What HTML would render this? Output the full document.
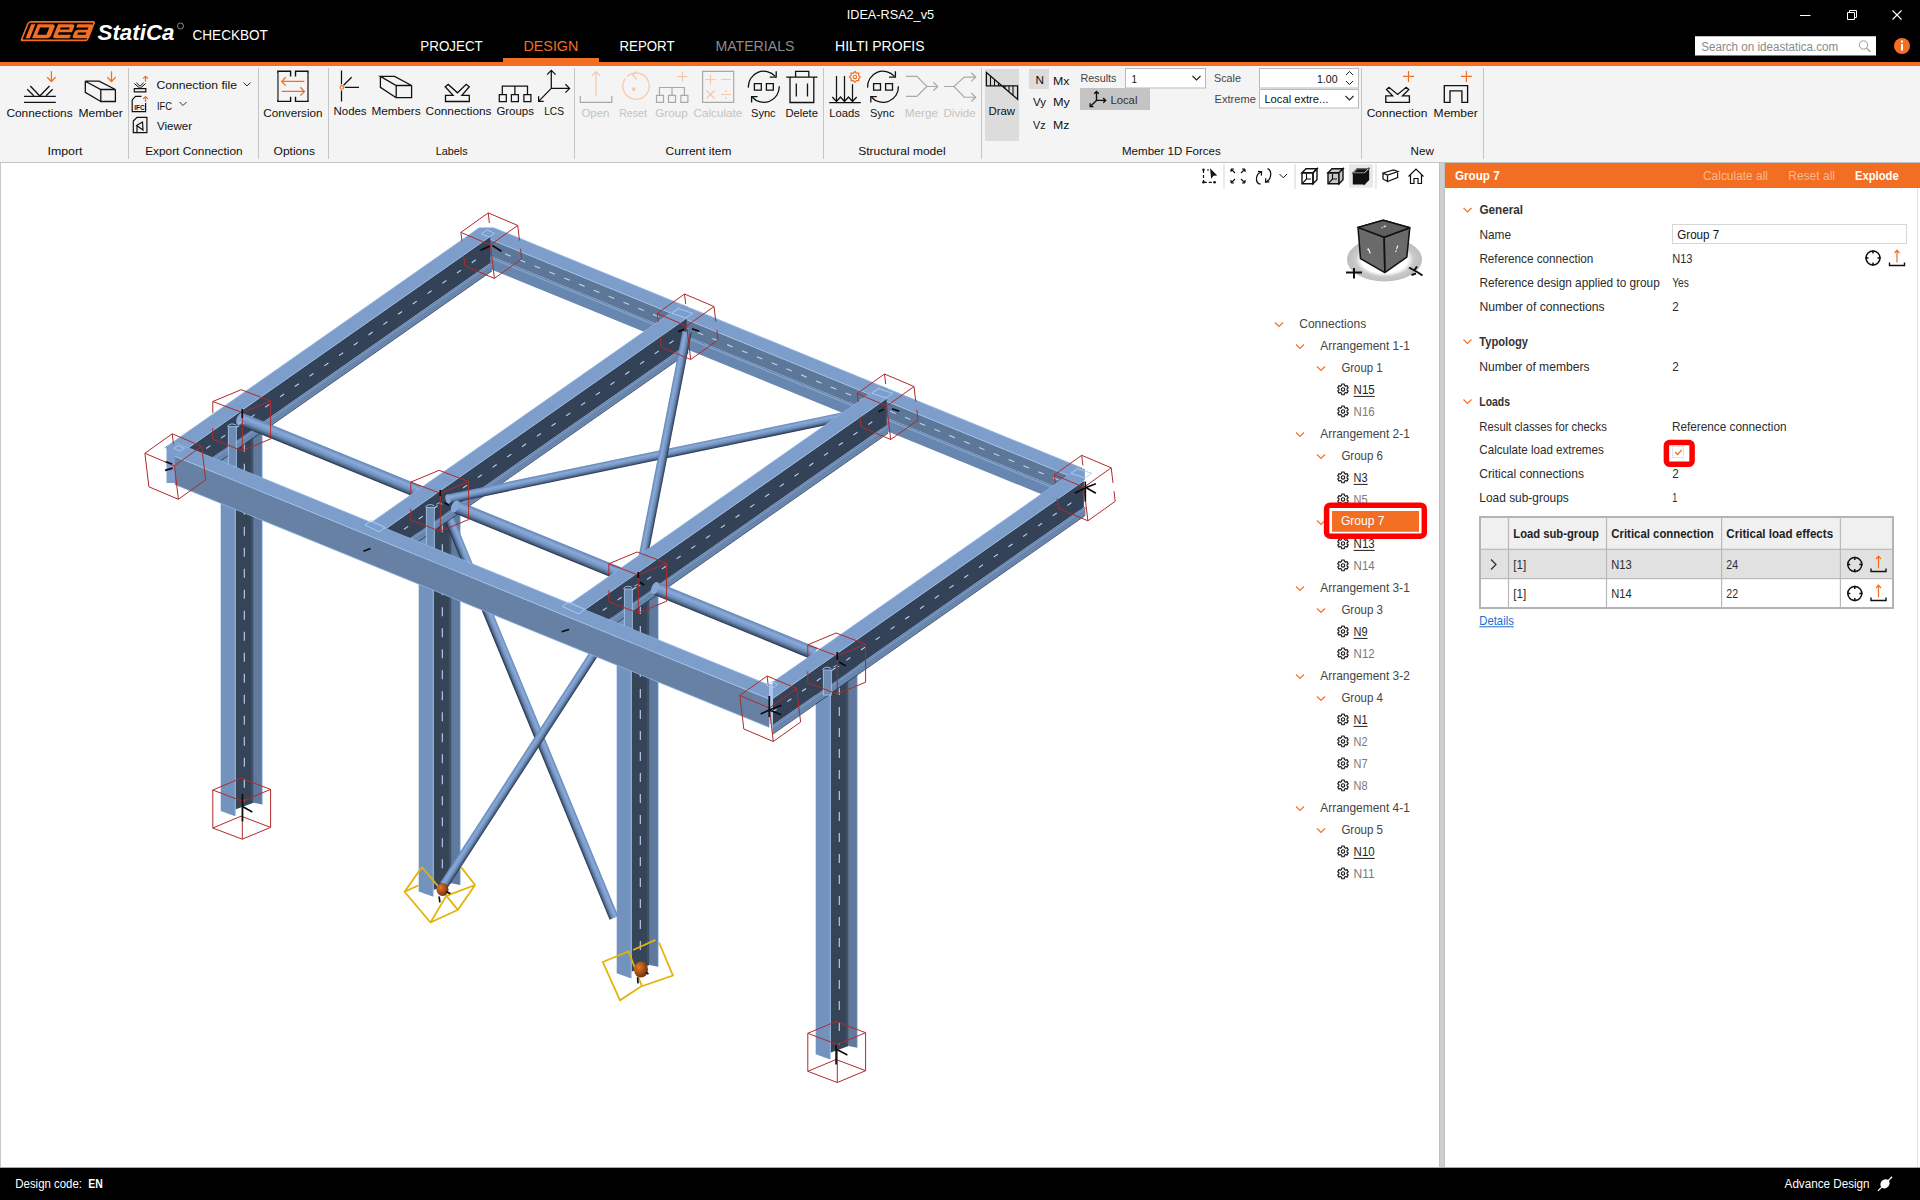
<!DOCTYPE html>
<html><head><meta charset="utf-8"><title>IDEA StatiCa Checkbot</title>
<style>*{margin:0;padding:0}html,body{width:1920px;height:1200px;overflow:hidden;background:#fff;font-family:"Liberation Sans",sans-serif}</style>
</head><body>
<svg width="1920" height="1200" viewBox="0 0 1920 1200" style="position:absolute;left:0;top:0;font-family:'Liberation Sans',sans-serif"><rect x="0" y="0" width="1920" height="62" fill="#000" />
<rect x="0" y="62" width="1920" height="4" fill="#f26e22" />
<rect x="503" y="58" width="96" height="4" fill="#f26e22" />
<rect x="0" y="66" width="1920" height="96" fill="#f4f4f4" />
<rect x="0" y="162" width="1920" height="1" fill="#c4c4c4" />
<g transform="translate(20.5,21) skewX(-22)"><rect x="8.5" y="0.8" width="66" height="18.6" rx="2" fill="none" stroke="#f26e22" stroke-width="1.7"/><rect x="12" y="3.2" width="4.2" height="14" fill="#f26e22"/><path d="M18.5 3.2 H33 Q36.5 3.2 36.5 6.5 V14 Q36.5 17.2 33 17.2 H18.5 Z M22.3 6.6 V13.8 H31.5 V6.6 Z" fill="#f26e22" fill-rule="evenodd"/><path d="M38.8 3.2 H53 Q56 3.2 56 6 V11.2 H42.8 V13.8 H56 V17.2 H41.5 Q38.8 17.2 38.8 14.5 Z M42.8 6.6 V8.6 H52 V6.6 Z" fill="#f26e22" fill-rule="evenodd"/><path d="M58.3 3.2 H72 Q74.6 3.2 74.6 6 V17.2 H61 Q58.3 17.2 58.3 14.5 V11.5 Q58.3 8.8 61 8.8 H70.6 V6.6 H58.3 Z M62.3 11.6 V13.8 H70.6 V11.6 Z" fill="#f26e22" fill-rule="evenodd"/></g>
<text x="97.5" y="39.6" font-size="22" fill="#fff" font-weight="700" textLength="77" lengthAdjust="spacingAndGlyphs" style="font-style:italic" >StatiCa</text>
<circle cx="180.5" cy="26" r="3" fill="none" stroke="#aaa" stroke-width="0.8"/>
<text x="192.5" y="40" font-size="15" fill="#fff" textLength="75.4" lengthAdjust="spacingAndGlyphs" >CHECKBOT</text>
<text x="846.75" y="18.8" font-size="13.5" fill="#fff" textLength="87.3" lengthAdjust="spacingAndGlyphs" >IDEA-RSA2_v5</text>
<text x="420.3" y="51" font-size="15" fill="#fff" textLength="62.5" lengthAdjust="spacingAndGlyphs" >PROJECT</text>
<text x="523.4" y="51" font-size="15" fill="#f26e22" textLength="55" lengthAdjust="spacingAndGlyphs" >DESIGN</text>
<text x="619.5" y="51" font-size="15" fill="#fff" textLength="55" lengthAdjust="spacingAndGlyphs" >REPORT</text>
<text x="715.4" y="51" font-size="15" fill="#8c8c8c" textLength="79.1" lengthAdjust="spacingAndGlyphs" >MATERIALS</text>
<text x="835.1" y="51" font-size="15" fill="#fff" textLength="89.4" lengthAdjust="spacingAndGlyphs" >HILTI PROFIS</text>
<line x1="1800" y1="15.5" x2="1810.5" y2="15.5" stroke="#fff" stroke-width="1" />
<path d="M1847.5 12.5 h7 v7 h-7 z M1849.5 12.5 v-2 h7 v7 h-2" fill="none" stroke="#fff" stroke-width="1"/>
<path d="M1892.5 10.5 L1901.5 19.5 M1901.5 10.5 L1892.5 19.5" stroke="#fff" stroke-width="1.1"/>
<rect x="1695" y="36.25" width="181" height="19.25" fill="#fff" />
<text x="1701.25" y="51" font-size="12.5" fill="#8a8a8a" textLength="137" lengthAdjust="spacingAndGlyphs" >Search on ideastatica.com</text>
<circle cx="1863.5" cy="45" r="4.2" fill="none" stroke="#999" stroke-width="1"/><line x1="1866.5" y1="48" x2="1870.5" y2="52" stroke="#999" stroke-width="1.1"/>
<circle cx="1902" cy="46" r="8" fill="#f26e22"/>
<rect x="1901" y="44" width="2" height="6.5" fill="#fff" />
<rect x="1901" y="40.5" width="2" height="2" fill="#fff" />
<rect x="128.0" y="68" width="1" height="91" fill="#c6c6c6" />
<rect x="258.0" y="68" width="1" height="91" fill="#c6c6c6" />
<rect x="328.0" y="68" width="1" height="91" fill="#c6c6c6" />
<rect x="574.0" y="68" width="1" height="91" fill="#c6c6c6" />
<rect x="823.0" y="68" width="1" height="91" fill="#c6c6c6" />
<rect x="981.0" y="68" width="1" height="91" fill="#c6c6c6" />
<rect x="1361.0" y="68" width="1" height="91" fill="#c6c6c6" />
<rect x="1483.0" y="68" width="1" height="91" fill="#c6c6c6" />
<text x="6.4" y="116.8" font-size="11.6" fill="#111" textLength="66.2" lengthAdjust="spacingAndGlyphs" >Connections</text>
<text x="78.4" y="116.8" font-size="11.6" fill="#111" textLength="44.3" lengthAdjust="spacingAndGlyphs" >Member</text>
<text x="263.3" y="116.8" font-size="11.6" fill="#111" textLength="59.3" lengthAdjust="spacingAndGlyphs" >Conversion</text>
<text x="581.4" y="116.8" font-size="11.6" fill="#c3c3c3" textLength="28" lengthAdjust="spacingAndGlyphs" >Open</text>
<text x="619.2" y="116.8" font-size="11.6" fill="#c3c3c3" textLength="27.8" lengthAdjust="spacingAndGlyphs" >Reset</text>
<text x="655.3" y="116.8" font-size="11.6" fill="#c3c3c3" textLength="32.4" lengthAdjust="spacingAndGlyphs" >Group</text>
<text x="693.6" y="116.8" font-size="11.6" fill="#c3c3c3" textLength="48.6" lengthAdjust="spacingAndGlyphs" >Calculate</text>
<text x="751" y="116.8" font-size="11.6" fill="#111" textLength="24.6" lengthAdjust="spacingAndGlyphs" >Sync</text>
<text x="785.5" y="116.8" font-size="11.6" fill="#111" textLength="32.4" lengthAdjust="spacingAndGlyphs" >Delete</text>
<text x="829.2" y="116.8" font-size="11.6" fill="#111" textLength="30.7" lengthAdjust="spacingAndGlyphs" >Loads</text>
<text x="870" y="116.8" font-size="11.6" fill="#111" textLength="24.4" lengthAdjust="spacingAndGlyphs" >Sync</text>
<text x="904.7" y="116.8" font-size="11.6" fill="#c3c3c3" textLength="33.3" lengthAdjust="spacingAndGlyphs" >Merge</text>
<text x="943.4" y="116.8" font-size="11.6" fill="#c3c3c3" textLength="32.4" lengthAdjust="spacingAndGlyphs" >Divide</text>
<text x="1366.7" y="116.8" font-size="11.6" fill="#111" textLength="60.7" lengthAdjust="spacingAndGlyphs" >Connection</text>
<text x="1433.6" y="116.8" font-size="11.6" fill="#111" textLength="44.2" lengthAdjust="spacingAndGlyphs" >Member</text>
<text x="333.5" y="114.8" font-size="11.6" fill="#111" textLength="33.1" lengthAdjust="spacingAndGlyphs" >Nodes</text>
<text x="371.4" y="114.8" font-size="11.6" fill="#111" textLength="49.2" lengthAdjust="spacingAndGlyphs" >Members</text>
<text x="425.6" y="114.8" font-size="11.6" fill="#111" textLength="65.9" lengthAdjust="spacingAndGlyphs" >Connections</text>
<text x="496.4" y="114.8" font-size="11.6" fill="#111" textLength="37.6" lengthAdjust="spacingAndGlyphs" >Groups</text>
<text x="544.2" y="114.8" font-size="11.6" fill="#111" textLength="19.8" lengthAdjust="spacingAndGlyphs" >LCS</text>
<text x="47.5" y="154.8" font-size="11.6" fill="#111" textLength="35" lengthAdjust="spacingAndGlyphs" >Import</text>
<text x="145.2" y="154.8" font-size="11.6" fill="#111" textLength="97.4" lengthAdjust="spacingAndGlyphs" >Export Connection</text>
<text x="273.6" y="154.8" font-size="11.6" fill="#111" textLength="41.3" lengthAdjust="spacingAndGlyphs" >Options</text>
<text x="435.7" y="154.8" font-size="11.6" fill="#111" textLength="31.9" lengthAdjust="spacingAndGlyphs" >Labels</text>
<text x="665.6" y="154.8" font-size="11.6" fill="#111" textLength="65.9" lengthAdjust="spacingAndGlyphs" >Current item</text>
<text x="858.3" y="154.8" font-size="11.6" fill="#111" textLength="87.3" lengthAdjust="spacingAndGlyphs" >Structural model</text>
<text x="1122" y="154.8" font-size="11.6" fill="#111" textLength="98.7" lengthAdjust="spacingAndGlyphs" >Member 1D Forces</text>
<text x="1410.6" y="154.8" font-size="11.6" fill="#111" textLength="23.2" lengthAdjust="spacingAndGlyphs" >New</text>
<text x="156.4" y="89.3" font-size="11.6" fill="#111" textLength="80.6" lengthAdjust="spacingAndGlyphs" >Connection file</text>
<text x="157" y="109.5" font-size="11.6" fill="#111" textLength="15" lengthAdjust="spacingAndGlyphs" >IFC</text>
<text x="157" y="130" font-size="11.6" fill="#111" textLength="35" lengthAdjust="spacingAndGlyphs" >Viewer</text>
<path d="M243.5 82.5 l3.5 3.5 l3.5 -3.5" fill="none" stroke="#333" stroke-width="1"/>
<path d="M179.5 102 l3.5 3.5 l3.5 -3.5" fill="none" stroke="#333" stroke-width="1"/>
<rect x="985" y="69" width="34" height="72" fill="#dcdcdc" />
<rect x="1029" y="69" width="20" height="20" fill="#dcdcdc" />
<text x="988.5" y="115" font-size="11.6" fill="#111" textLength="26.5" lengthAdjust="spacingAndGlyphs" >Draw</text>
<text x="1035.5" y="84" font-size="11.6" fill="#111" textLength="8.5" lengthAdjust="spacingAndGlyphs" >N</text>
<text x="1053" y="84.5" font-size="11.6" fill="#111" textLength="16.4" lengthAdjust="spacingAndGlyphs" >Mx</text>
<text x="1033" y="106" font-size="11.6" fill="#111" textLength="13" lengthAdjust="spacingAndGlyphs" >Vy</text>
<text x="1053" y="106" font-size="11.6" fill="#111" textLength="17" lengthAdjust="spacingAndGlyphs" >My</text>
<text x="1033" y="128.5" font-size="11.6" fill="#111" textLength="12.5" lengthAdjust="spacingAndGlyphs" >Vz</text>
<text x="1053" y="128.5" font-size="11.6" fill="#111" textLength="16.4" lengthAdjust="spacingAndGlyphs" >Mz</text>
<text x="1080.5" y="82" font-size="11.6" fill="#444" textLength="36" lengthAdjust="spacingAndGlyphs" >Results</text>
<rect x="1125.5" y="68.5" width="80" height="19.5" fill="#fff" stroke="#b9b9b9" stroke-width="1"/>
<text x="1131.5" y="82.5" font-size="11.6" fill="#111" textLength="5.5" lengthAdjust="spacingAndGlyphs" >1</text>
<path d="M1192.5 76 l4 4 l4 -4" fill="none" stroke="#222" stroke-width="1.1"/>
<rect x="1080" y="88" width="70" height="22" fill="#c4c4c4" />
<text x="1110.4" y="103.5" font-size="11.6" fill="#333" textLength="27" lengthAdjust="spacingAndGlyphs" >Local</text>
<text x="1214" y="82" font-size="11.6" fill="#444" textLength="27" lengthAdjust="spacingAndGlyphs" >Scale</text>
<rect x="1259.5" y="68.5" width="99" height="19.5" fill="#fff" stroke="#b9b9b9" stroke-width="1"/>
<text x="1317" y="82.5" font-size="11.6" fill="#111" textLength="20.5" lengthAdjust="spacingAndGlyphs" >1.00</text>
<path d="M1346 75 l3.5 -3.5 l3.5 3.5 M1346 81 l3.5 3.5 l3.5 -3.5" fill="none" stroke="#222" stroke-width="1"/>
<text x="1214.6" y="102.5" font-size="11.6" fill="#444" textLength="41.2" lengthAdjust="spacingAndGlyphs" >Extreme</text>
<rect x="1259.5" y="89.5" width="99" height="18.5" fill="#fff" stroke="#b9b9b9" stroke-width="1"/>
<text x="1264.4" y="103" font-size="11.6" fill="#111" textLength="64" lengthAdjust="spacingAndGlyphs" >Local extre...</text>
<path d="M1345.5 96 l4 4 l4 -4" fill="none" stroke="#222" stroke-width="1.1"/>
<rect x="0" y="163" width="1439" height="1004" fill="#fff" />
<rect x="0" y="163" width="1" height="1004" fill="#c8c8c8" />
<rect x="1439" y="163" width="6" height="1004" fill="#cfcfcf" />
<rect x="1439" y="163" width="0.8" height="1004" fill="#bdbdbd" />
<rect x="1444.2" y="163" width="0.8" height="1004" fill="#bdbdbd" />
<rect x="1445" y="163" width="475" height="1004" fill="#fff" />
<rect x="1917" y="188" width="1" height="979" fill="#e2e2e2" />
<rect x="0" y="1167" width="1920" height="1" fill="#a8a8a8" />
<rect x="0" y="1168" width="1920" height="32" fill="#000" />
<text x="15.3" y="1187.5" font-size="12" fill="#fff" textLength="66.7" lengthAdjust="spacingAndGlyphs" >Design code:</text>
<text x="88.3" y="1187.5" font-size="12" fill="#fff" font-weight="700" textLength="14.5" lengthAdjust="spacingAndGlyphs" >EN</text>
<text x="1784.6" y="1187.8" font-size="12" fill="#fff" textLength="85" lengthAdjust="spacingAndGlyphs" >Advance Design</text>
<g transform="translate(1885,1183.8) rotate(-45)"><ellipse cx="0" cy="0" rx="5" ry="4.2" fill="#fff"/><rect x="-10" y="-0.6" width="20" height="1.3" fill="#fff"/></g>
<g id="model">
<polygon points="484.56,224.02 1082.00,468.07 1082.00,481.07 472.84,232.22" fill="#7d9ecb" />
<polygon points="489.50,239.03 1082.00,481.07 1082.00,497.57 489.50,255.53" fill="#5d7799" />
<polygon points="489.50,255.53 1082.00,497.57 1082.00,510.77 489.50,268.73" fill="#6887b0" />
<line x1="489.50" y1="257.53" x2="1082.00" y2="499.57" stroke="#87a7d3" stroke-width="1.2" />
<line x1="489.50" y1="239.03" x2="1082.00" y2="481.07" stroke="#a3c4ee" stroke-width="0.9" />
<line x1="486.00" y1="224.60" x2="1082.00" y2="468.07" stroke="#8fb2e2" stroke-width="0.8" />
<line x1="505.00" y1="253.86" x2="1075.00" y2="486.71" stroke="#bcd3f0" stroke-width="1.1" stroke-dasharray="6 10"/>
<polygon points="220.70,412.70 235.30,412.70 235.30,816.20 220.70,810.90" fill="#7393bf" />
<polygon points="235.30,412.70 253.50,412.70 253.50,802.70 235.30,809.40" fill="#354457" />
<polygon points="253.50,412.70 262.20,412.70 262.20,804.50 253.50,802.70" fill="#5f7a9e" />
<rect x="250.80" y="412.7" width="2.7" height="388.5" fill="#3f5069"/>
<line x1="235.30" y1="412.7" x2="235.30" y2="815.2" stroke="#a3c4ee" stroke-width="0.9"/>
<line x1="262.30" y1="412.7" x2="262.30" y2="804.2" stroke="#9fc0ea" stroke-width="0.7"/>
<line x1="244.30" y1="442.7" x2="244.30" y2="801.2" stroke="#bcd3f0" stroke-width="1.1" stroke-dasharray="9 12"/>
<polygon points="418.70,493.30 433.30,493.30 433.30,896.80 418.70,891.50" fill="#7393bf" />
<polygon points="433.30,493.30 451.50,493.30 451.50,883.30 433.30,890.00" fill="#354457" />
<polygon points="451.50,493.30 460.20,493.30 460.20,885.10 451.50,883.30" fill="#5f7a9e" />
<rect x="448.80" y="493.3" width="2.7" height="388.5" fill="#3f5069"/>
<line x1="433.30" y1="493.3" x2="433.30" y2="895.8" stroke="#a3c4ee" stroke-width="0.9"/>
<line x1="460.30" y1="493.3" x2="460.30" y2="884.8" stroke="#9fc0ea" stroke-width="0.7"/>
<line x1="442.30" y1="523.3" x2="442.30" y2="881.8" stroke="#bcd3f0" stroke-width="1.1" stroke-dasharray="9 12"/>
<defs><linearGradient id="gvb2" gradientUnits="userSpaceOnUse" x1="618.39" y1="916.19" x2="609.61" y2="919.81"><stop offset="0" stop-color="#6386b6"/><stop offset="0.3" stop-color="#8aabda"/><stop offset="0.62" stop-color="#7090bc"/><stop offset="0.86" stop-color="#475d7e"/><stop offset="1" stop-color="#223046"/></linearGradient></defs>
<polygon points="618.39,916.19 444.39,495.19 435.61,498.81 609.61,919.81" fill="url(#gvb2)" />
<defs><linearGradient id="gvb1" gradientUnits="userSpaceOnUse" x1="440.22" y1="882.55" x2="447.78" y2="887.45"><stop offset="0" stop-color="#6386b6"/><stop offset="0.3" stop-color="#8aabda"/><stop offset="0.62" stop-color="#7090bc"/><stop offset="0.86" stop-color="#475d7e"/><stop offset="1" stop-color="#223046"/></linearGradient></defs>
<polygon points="440.22,882.55 630.22,589.55 637.78,594.45 447.78,887.45" fill="url(#gvb1)" />
<polygon points="616.70,575.00 631.30,575.00 631.30,978.50 616.70,973.20" fill="#7393bf" />
<polygon points="631.30,575.00 649.50,575.00 649.50,965.00 631.30,971.70" fill="#354457" />
<polygon points="649.50,575.00 658.20,575.00 658.20,966.80 649.50,965.00" fill="#5f7a9e" />
<rect x="646.80" y="575.0" width="2.7" height="388.5" fill="#3f5069"/>
<line x1="631.30" y1="575.0" x2="631.30" y2="977.5" stroke="#a3c4ee" stroke-width="0.9"/>
<line x1="658.30" y1="575.0" x2="658.30" y2="966.5" stroke="#9fc0ea" stroke-width="0.7"/>
<line x1="640.30" y1="605.0" x2="640.30" y2="963.5" stroke="#bcd3f0" stroke-width="1.1" stroke-dasharray="9 12"/>
<polygon points="815.70,656.00 830.30,656.00 830.30,1059.50 815.70,1054.20" fill="#7393bf" />
<polygon points="830.30,656.00 848.50,656.00 848.50,1046.00 830.30,1052.70" fill="#354457" />
<polygon points="848.50,656.00 857.20,656.00 857.20,1047.80 848.50,1046.00" fill="#5f7a9e" />
<rect x="845.80" y="656.0" width="2.7" height="388.5" fill="#3f5069"/>
<line x1="830.30" y1="656.0" x2="830.30" y2="1058.5" stroke="#a3c4ee" stroke-width="0.9"/>
<line x1="857.30" y1="656.0" x2="857.30" y2="1047.5" stroke="#9fc0ea" stroke-width="0.7"/>
<line x1="839.30" y1="686.0" x2="839.30" y2="1044.5" stroke="#bcd3f0" stroke-width="1.1" stroke-dasharray="9 12"/>
<polygon points="164.77,447.87 484.56,224.02 491.40,226.81 491.40,235.63 179.57,453.91" fill="#7d9ecb" />
<polygon points="179.57,453.91 490.40,236.33 490.40,262.93 203.57,463.71" fill="#334256" />
<polygon points="203.57,463.71 491.90,261.88 491.90,270.68 211.50,466.96" fill="#6785ad" />
<line x1="205.73" y1="464.60" x2="491.90" y2="264.28" stroke="#7f9fcb" stroke-width="1" />
<line x1="179.57" y1="453.91" x2="490.40" y2="236.33" stroke="#a3c4ee" stroke-width="0.9" />
<line x1="164.77" y1="447.87" x2="484.56" y2="224.02" stroke="#8fb2e2" stroke-width="0.8" />
<line x1="211.77" y1="467.07" x2="491.90" y2="270.98" stroke="#26334a" stroke-width="0.8" />
<line x1="191.57" y1="458.81" x2="484.40" y2="253.83" stroke="#bcd3f0" stroke-width="1.1" stroke-dasharray="5 13"/>
<defs><linearGradient id="gt1" gradientUnits="userSpaceOnUse" x1="242.76" y1="412.88" x2="237.84" y2="424.92"><stop offset="0" stop-color="#6386b6"/><stop offset="0.3" stop-color="#8aabda"/><stop offset="0.62" stop-color="#7090bc"/><stop offset="0.86" stop-color="#475d7e"/><stop offset="1" stop-color="#223046"/></linearGradient></defs>
<polygon points="242.76,412.88 422.46,486.27 417.54,498.31 237.84,424.92" fill="url(#gt1)" />
<ellipse cx="240.30" cy="418.90" rx="3.58" ry="6.50" transform="rotate(22.2 240.30 418.90)" fill="#86a6d3"/>
<polygon points="478.5,227.5 494,227.5 484.5,222.5" fill="#fff"/>
<polygon points="362.52,528.65 682.31,304.79 687.70,307.00 687.70,317.42 377.31,534.69" fill="#7d9ecb" />
<polygon points="377.31,534.69 686.70,318.12 686.70,344.72 401.31,544.49" fill="#334256" />
<polygon points="401.31,544.49 688.20,343.67 688.20,352.47 409.25,547.74" fill="#6785ad" />
<line x1="403.48" y1="545.38" x2="688.20" y2="346.07" stroke="#7f9fcb" stroke-width="1" />
<line x1="377.31" y1="534.69" x2="686.70" y2="318.12" stroke="#a3c4ee" stroke-width="0.9" />
<line x1="362.52" y1="528.65" x2="682.31" y2="304.79" stroke="#8fb2e2" stroke-width="0.8" />
<line x1="409.52" y1="547.85" x2="688.20" y2="352.77" stroke="#26334a" stroke-width="0.8" />
<line x1="389.31" y1="539.59" x2="680.70" y2="335.62" stroke="#bcd3f0" stroke-width="1.1" stroke-dasharray="5 13"/>
<defs><linearGradient id="gtb1" gradientUnits="userSpaceOnUse" x1="447.05" y1="494.55" x2="448.95" y2="503.65"><stop offset="0" stop-color="#6386b6"/><stop offset="0.3" stop-color="#8aabda"/><stop offset="0.62" stop-color="#7090bc"/><stop offset="0.86" stop-color="#475d7e"/><stop offset="1" stop-color="#223046"/></linearGradient></defs>
<polygon points="447.05,494.55 885.05,403.45 886.95,412.55 448.95,503.65" fill="url(#gtb1)" />
<ellipse cx="448.00" cy="499.10" rx="2.56" ry="4.65" transform="rotate(-11.7 448.00 499.10)" fill="#86a6d3"/>
<defs><linearGradient id="gtb2" gradientUnits="userSpaceOnUse" x1="682.48" y1="331.12" x2="691.52" y2="332.88"><stop offset="0" stop-color="#6386b6"/><stop offset="0.3" stop-color="#8aabda"/><stop offset="0.62" stop-color="#7090bc"/><stop offset="0.86" stop-color="#475d7e"/><stop offset="1" stop-color="#223046"/></linearGradient></defs>
<polygon points="682.48,331.12 634.18,579.12 643.22,580.88 691.52,332.88" fill="url(#gtb2)" />
<defs><linearGradient id="gt2" gradientUnits="userSpaceOnUse" x1="457.46" y1="500.57" x2="452.54" y2="512.61"><stop offset="0" stop-color="#6386b6"/><stop offset="0.3" stop-color="#8aabda"/><stop offset="0.62" stop-color="#7090bc"/><stop offset="0.86" stop-color="#475d7e"/><stop offset="1" stop-color="#223046"/></linearGradient></defs>
<polygon points="457.46,500.57 632.46,572.06 627.54,584.09 452.54,512.61" fill="url(#gt2)" />
<ellipse cx="455.00" cy="506.59" rx="3.58" ry="6.50" transform="rotate(22.2 455.00 506.59)" fill="#86a6d3"/>
<polygon points="561.26,609.83 881.05,385.98 887.70,388.70 887.70,397.72 576.05,615.87" fill="#7d9ecb" />
<polygon points="576.05,615.87 886.70,398.42 886.70,425.02 600.05,625.68" fill="#334256" />
<polygon points="600.05,625.68 888.20,423.97 888.20,432.77 607.99,628.92" fill="#6785ad" />
<line x1="602.21" y1="626.56" x2="888.20" y2="426.37" stroke="#7f9fcb" stroke-width="1" />
<line x1="576.05" y1="615.87" x2="886.70" y2="398.42" stroke="#a3c4ee" stroke-width="0.9" />
<line x1="561.26" y1="609.83" x2="881.05" y2="385.98" stroke="#8fb2e2" stroke-width="0.8" />
<line x1="608.26" y1="629.03" x2="888.20" y2="433.07" stroke="#26334a" stroke-width="0.8" />
<line x1="588.05" y1="620.78" x2="880.70" y2="415.92" stroke="#bcd3f0" stroke-width="1.1" stroke-dasharray="5 13"/>
<defs><linearGradient id="gt3" gradientUnits="userSpaceOnUse" x1="657.46" y1="582.27" x2="652.54" y2="594.31"><stop offset="0" stop-color="#6386b6"/><stop offset="0.3" stop-color="#8aabda"/><stop offset="0.62" stop-color="#7090bc"/><stop offset="0.86" stop-color="#475d7e"/><stop offset="1" stop-color="#223046"/></linearGradient></defs>
<polygon points="657.46,582.27 817.46,647.63 812.54,659.67 652.54,594.31" fill="url(#gt3)" />
<ellipse cx="655.00" cy="588.29" rx="3.58" ry="6.50" transform="rotate(22.2 655.00 588.29)" fill="#86a6d3"/>
<polygon points="772.50,682.26 1079.78,467.16 1084.90,469.25 1084.90,479.98 772.50,698.66" fill="#7d9ecb" />
<polygon points="772.50,698.66 1083.90,480.68 1083.90,507.28 772.50,725.26" fill="#334256" />
<polygon points="772.50,725.26 1085.40,506.23 1085.40,515.03 772.50,734.06" fill="#6785ad" />
<line x1="772.50" y1="727.66" x2="1085.40" y2="508.63" stroke="#7f9fcb" stroke-width="1" />
<line x1="772.50" y1="698.66" x2="1083.90" y2="480.68" stroke="#a3c4ee" stroke-width="0.9" />
<line x1="772.50" y1="682.26" x2="1079.78" y2="467.16" stroke="#8fb2e2" stroke-width="0.8" />
<line x1="772.50" y1="734.36" x2="1085.40" y2="515.33" stroke="#26334a" stroke-width="0.8" />
<line x1="772.50" y1="711.96" x2="1077.90" y2="498.18" stroke="#bcd3f0" stroke-width="1.1" stroke-dasharray="5 13"/>
<rect x="228.3" y="426.7" width="8" height="40" fill="#6e8bb4" stroke="#a9cdf6" stroke-width="0.8"/>
<path d="M227.3 426.2 q4 -4 9 -1 M238.3 423.7 q3 -3 6 0" fill="none" stroke="#a9cdf6" stroke-width="0.9"/>
<rect x="426.3" y="507.3" width="8" height="42" fill="#6e8bb4" stroke="#a9cdf6" stroke-width="0.8"/>
<path d="M425.3 506.8 q4 -4 9 -1 M436.3 504.3 q3 -3 6 0" fill="none" stroke="#a9cdf6" stroke-width="0.9"/>
<rect x="624.3" y="589.0" width="8" height="42" fill="#6e8bb4" stroke="#a9cdf6" stroke-width="0.8"/>
<path d="M623.3 588.5 q4 -4 9 -1 M634.3 586.0 q3 -3 6 0" fill="none" stroke="#a9cdf6" stroke-width="0.9"/>
<rect x="823.3" y="670.0" width="8" height="25" fill="#6e8bb4" stroke="#a9cdf6" stroke-width="0.8"/>
<path d="M822.3 669.5 q4 -4 9 -1 M833.3 667.0 q3 -3 6 0" fill="none" stroke="#a9cdf6" stroke-width="0.9"/>
<defs><linearGradient id="gfb" x1="0" y1="0" x2="0" y2="1"><stop offset="0" stop-color="#7291bb"/><stop offset="0.35" stop-color="#6c88b1"/><stop offset="1" stop-color="#627ca1"/></linearGradient></defs>
<polygon points="174.70,442.22 769.30,685.12 769.30,699.12 174.70,456.22" fill="#7d9ecb" />
<polygon points="174.70,456.22 769.30,699.12 769.30,727.42 174.70,484.52" fill="#6781a5" />
<line x1="174.70" y1="456.22" x2="769.30" y2="699.12" stroke="#a3c4ee" stroke-width="0.9" />
<line x1="174.70" y1="442.22" x2="769.30" y2="685.12" stroke="#8fb2e2" stroke-width="0.8" />
<line x1="174.70" y1="484.52" x2="769.30" y2="727.42" stroke="#8fb2e2" stroke-width="0.8" />
<rect x="166.5" y="446" width="8.5" height="37" fill="#7d9cc9"/>
<rect x="769" y="684" width="4" height="40" fill="#a8c6ee"/>
<path d="M490.4 244.9 L460.9 232.4 M490.4 244.9 L517.7 225.4 M460.9 232.4 L488.2 212.9 M517.7 225.4 L488.2 212.9 M490.4 244.9 L494.4 278.4 M494.4 278.4 L464.9 265.9 M494.4 278.4 L521.7 258.9 M460.9 232.4 L461.9 240.8 M517.7 225.4 L519.5 240.5 M488.2 212.9 L489.4 223.0 M464.9 265.9 L463.7 255.8 M521.7 258.9 L520.5 248.8" stroke="#b02a2a" stroke-width="1" fill="none"/>
<path d="M686.7 326.0 L657.2 313.5 M686.7 326.0 L714.0 306.5 M657.2 313.5 L684.5 294.0 M714.0 306.5 L684.5 294.0 M686.7 326.0 L690.7 359.5 M690.7 359.5 L661.2 347.0 M690.7 359.5 L718.0 340.0 M657.2 313.5 L658.2 321.9 M714.0 306.5 L715.8 321.6 M684.5 294.0 L685.7 304.1 M661.2 347.0 L660.0 336.9 M718.0 340.0 L716.8 329.9" stroke="#b02a2a" stroke-width="1" fill="none"/>
<path d="M886.7 406.0 L857.2 393.5 M886.7 406.0 L914.0 386.5 M857.2 393.5 L884.5 374.0 M914.0 386.5 L884.5 374.0 M886.7 406.0 L890.7 439.5 M890.7 439.5 L861.2 427.0 M890.7 439.5 L918.0 420.0 M857.2 393.5 L858.2 401.9 M914.0 386.5 L915.8 401.6 M884.5 374.0 L885.7 384.1 M861.2 427.0 L860.0 416.9 M918.0 420.0 L916.8 409.9" stroke="#b02a2a" stroke-width="1" fill="none"/>
<path d="M1083.9 487.3 L1054.4 474.8 M1083.9 487.3 L1111.2 467.8 M1054.4 474.8 L1081.7 455.3 M1111.2 467.8 L1081.7 455.3 M1083.9 487.3 L1087.9 520.8 M1087.9 520.8 L1058.4 508.3 M1087.9 520.8 L1115.2 501.3 M1054.4 474.8 L1055.4 483.2 M1111.2 467.8 L1113.0 482.9 M1081.7 455.3 L1082.9 465.4 M1058.4 508.3 L1057.2 498.2 M1115.2 501.3 L1114.0 491.2" stroke="#b02a2a" stroke-width="1" fill="none"/>
<path d="M174.4 465.8 L144.9 453.3 M174.4 465.8 L201.7 446.3 M144.9 453.3 L172.2 433.8 M201.7 446.3 L172.2 433.8 M174.4 465.8 L178.4 499.3 M178.4 499.3 L148.9 486.8 M178.4 499.3 L205.7 479.8 M144.9 453.3 L148.9 486.8 M201.7 446.3 L205.7 479.8 M172.2 433.8 L173.4 443.9" stroke="#b02a2a" stroke-width="1" fill="none"/>
<path d="M769.3 708.0 L739.8 695.5 M769.3 708.0 L796.6 688.5 M739.8 695.5 L767.1 676.0 M796.6 688.5 L767.1 676.0 M769.3 708.0 L773.3 741.5 M773.3 741.5 L743.8 729.0 M773.3 741.5 L800.6 722.0 M739.8 695.5 L743.8 729.0 M796.6 688.5 L800.6 722.0 M767.1 676.0 L768.3 686.0" stroke="#b02a2a" stroke-width="1" fill="none"/>
<path d="M242.3 412.7 L212.8 401.5 M242.3 412.7 L270.6 400.9 M212.8 401.5 L241.1 389.7 M270.6 400.9 L241.1 389.7 M242.3 412.7 L242.3 450.7 M242.3 450.7 L212.8 439.5 M242.3 450.7 L270.6 438.9 M270.6 400.9 L270.6 438.9 M212.8 401.5 L212.8 412.9 M212.8 439.5 L212.8 428.1" stroke="#b02a2a" stroke-width="1" fill="none"/>
<path d="M440.3 493.3 L410.8 482.1 M440.3 493.3 L468.6 481.5 M410.8 482.1 L439.1 470.3 M468.6 481.5 L439.1 470.3 M440.3 493.3 L440.3 531.3 M440.3 531.3 L410.8 520.1 M440.3 531.3 L468.6 519.5 M468.6 481.5 L468.6 519.5 M410.8 482.1 L410.8 493.5 M410.8 520.1 L410.8 508.7" stroke="#b02a2a" stroke-width="1" fill="none"/>
<path d="M638.3 575.0 L608.8 563.8 M638.3 575.0 L666.6 563.2 M608.8 563.8 L637.1 552.0 M666.6 563.2 L637.1 552.0 M638.3 575.0 L638.3 613.0 M638.3 613.0 L608.8 601.8 M638.3 613.0 L666.6 601.2 M666.6 563.2 L666.6 601.2 M608.8 563.8 L608.8 575.2 M608.8 601.8 L608.8 590.4" stroke="#b02a2a" stroke-width="1" fill="none"/>
<path d="M837.3 656.0 L807.8 644.8 M837.3 656.0 L865.6 644.2 M807.8 644.8 L836.1 633.0 M865.6 644.2 L836.1 633.0 M837.3 656.0 L837.3 694.0 M837.3 694.0 L807.8 682.8 M837.3 694.0 L865.6 682.2 M865.6 644.2 L865.6 682.2 M807.8 644.8 L807.8 656.2 M807.8 682.8 L807.8 671.4" stroke="#b02a2a" stroke-width="1" fill="none"/>
<path d="M242.3 801.2 L212.8 790.0 M242.3 801.2 L270.6 789.4 M212.8 790.0 L241.1 778.2 M270.6 789.4 L241.1 778.2 M242.3 801.2 L242.3 839.2 M242.3 839.2 L212.8 828.0 M242.3 839.2 L270.6 827.4 M212.8 790.0 L212.8 828.0 M270.6 789.4 L270.6 827.4 M212.8 828.0 L241.1 816.2 M270.6 827.4 L241.1 816.2" stroke="#b02a2a" stroke-width="1" fill="none"/>
<path d="M837.3 1044.5 L807.8 1033.3 M837.3 1044.5 L865.6 1032.7 M807.8 1033.3 L836.1 1021.5 M865.6 1032.7 L836.1 1021.5 M837.3 1044.5 L837.3 1082.5 M837.3 1082.5 L807.8 1071.3 M837.3 1082.5 L865.6 1070.7 M807.8 1033.3 L807.8 1071.3 M865.6 1032.7 L865.6 1070.7 M807.8 1071.3 L836.1 1059.5 M865.6 1070.7 L836.1 1059.5" stroke="#b02a2a" stroke-width="1" fill="none"/>
<path d="M421.9 867 L404.6 891.8 L430.5 922.5 L457.9 909.8 L475.1 885 M421.9 867 L446.3 895.9 L475.1 885 M446.3 895.9 L430.5 922.5 M446.3 895.9 L457.9 909.8 M404.6 891.8 L418.5 885.4 M461.3 867.4 L475.1 885" stroke="#e3b30a" stroke-width="1.8" fill="none"/>
<path d="M602.8 962 L628.6 951.5 L641.8 986 L620 1000.3 Z M642.5 986 L672.9 975.5 L659 942.5 M633.1 950 L655.6 939.9" stroke="#e3b30a" stroke-width="1.8" fill="none"/>
<defs><radialGradient id="gsph" cx="0.35" cy="0.35" r="0.7"><stop offset="0" stop-color="#e8782a"/><stop offset="1" stop-color="#6b2e0c"/></radialGradient></defs>
<ellipse cx="442.5" cy="889.5" rx="6" ry="6.5" fill="url(#gsph)"/>
<ellipse cx="641" cy="969.5" rx="7" ry="8" fill="url(#gsph)"/>
<path d="M480.5 250.2 L489.8 246.1 M492.2 245.5 L501.5 251.3 M678.3 331.7 L684 329.3 M692 328.7 L699.3 331.3 M878.3 411.7 L884 409.3 M892 408.7 L899.3 411.3 M1074.8 493.3 L1086.7 487.3 M1086.7 487.3 L1095.9 483.7 M1086.7 488 L1095.9 493.3 M1085.3 481.4 L1085.3 501.6 M165.7 461.7 L172.1 464 M165.1 470.4 L172.7 468.1 M760.7 714 L769.3 710 M769.3 710 L781.3 705.3 M769.3 710 L781.3 714.7 M769.3 696 L769.3 717 M242.5 794 L242.5 821.5 M242.5 806.5 L252.3 812.1 M836.1 1045 L836.1 1064.5 M836.9 1049.5 L847.4 1055.1 M439.1 896.5 L439.9 902.3 M446.4 891.8 L450.4 893.6 M637.6 977.3 L638 983.4 M645.9 972.5 L648.5 974 M363.5 551.3 L370.5 548.5 M561.6 631.8 L569.1 629.5 M242.3 409 L242.3 418 M638.3 572 L638.3 578 M640 582.3 L644.3 585 M440.3 490 L440.3 496 M837.3 652 L837.3 660 M839 662 L846 666 M444.5 502.5 L449 505.5" stroke="#0c0c0c" stroke-width="1.7" fill="none"/>
<polygon points="481.7,233.8 486.9,229.8 494.5,233.3 489.3,237.3" fill="none" stroke="#a9cdf6" stroke-width="0.9"/>
<polygon points="672,313.3 678.7,308.7 692.7,313.3 686,318" fill="none" stroke="#a9cdf6" stroke-width="0.9"/>
<polygon points="872,393.3 878.7,388.7 892.7,393.3 886,398" fill="none" stroke="#a9cdf6" stroke-width="0.9"/>
<polygon points="1071,473.3 1077.7,468.7 1091.7,473.3 1085,478" fill="none" stroke="#a9cdf6" stroke-width="0.9"/>
<polygon points="173.8,448.2 178.5,445.3 184.3,448.3 179.6,451.2" fill="none" stroke="#a9cdf6" stroke-width="0.9"/>
<polygon points="365,525 371,520.6 385.3,527.4 379.3,531.8" fill="none" stroke="#a9cdf6" stroke-width="0.9"/>
<polygon points="562.5,606.5 568.5,602 585,609.4 579,614" fill="none" stroke="#a9cdf6" stroke-width="0.9"/>
<polygon points="766.7,685.3 771.7,681.6 777.7,684.5 772.7,688.2" fill="none" stroke="#a9cdf6" stroke-width="0.9"/>
</g>
<rect x="1445" y="163" width="475" height="25" fill="#f26e22" />
<text x="1455" y="180" font-size="13" fill="#fff" font-weight="700" textLength="44.7" lengthAdjust="spacingAndGlyphs" >Group 7</text>
<text x="1703" y="180" font-size="12.5" fill="#f9b890" textLength="65" lengthAdjust="spacingAndGlyphs" >Calculate all</text>
<text x="1788.25" y="180" font-size="12.5" fill="#f9b890" textLength="46.75" lengthAdjust="spacingAndGlyphs" >Reset all</text>
<text x="1855" y="180" font-size="13" fill="#fff" font-weight="700" textLength="43.75" lengthAdjust="spacingAndGlyphs" >Explode</text>
<path d="M1463.5 208 l4 4 l4 -4" fill="none" stroke="#f26e22" stroke-width="1.1"/>
<text x="1479.4" y="214" font-size="13" fill="#333" font-weight="700" textLength="43.6" lengthAdjust="spacingAndGlyphs" >General</text>
<text x="1479.4" y="239.3" font-size="12.4" fill="#2b2b2b" textLength="31.6" lengthAdjust="spacingAndGlyphs" >Name</text>
<text x="1479.4" y="263.3" font-size="12.4" fill="#2b2b2b" textLength="114" lengthAdjust="spacingAndGlyphs" >Reference connection</text>
<text x="1479.4" y="287.2" font-size="12.4" fill="#2b2b2b" textLength="180.3" lengthAdjust="spacingAndGlyphs" >Reference design applied to group</text>
<text x="1479.4" y="311.2" font-size="12.4" fill="#2b2b2b" textLength="125.3" lengthAdjust="spacingAndGlyphs" >Number of connections</text>
<rect x="1672.5" y="224.5" width="234" height="19" fill="#fff" stroke="#d6d6d6" stroke-width="1"/>
<text x="1677.3" y="239.1" font-size="12.4" fill="#111" textLength="41.9" lengthAdjust="spacingAndGlyphs" >Group 7</text>
<text x="1672.2" y="262.9" font-size="12.4" fill="#2b2b2b" textLength="20.3" lengthAdjust="spacingAndGlyphs" >N13</text>
<text x="1672.2" y="287.2" font-size="12.4" fill="#2b2b2b" textLength="16.5" lengthAdjust="spacingAndGlyphs" >Yes</text>
<text x="1672.2" y="311.2" font-size="12.4" fill="#2b2b2b" textLength="6.5" lengthAdjust="spacingAndGlyphs" >2</text>
<circle cx="1873" cy="258" r="7" fill="none" stroke="#111" stroke-width="1.5"/>
<line x1="1873.0" y1="253.5" x2="1873.0" y2="250.2" stroke="#111" stroke-width="1.5"/>
<line x1="1873.0" y1="262.5" x2="1873.0" y2="265.8" stroke="#111" stroke-width="1.5"/>
<line x1="1868.5" y1="258.0" x2="1865.2" y2="258.0" stroke="#111" stroke-width="1.5"/>
<line x1="1877.5" y1="258.0" x2="1880.8" y2="258.0" stroke="#111" stroke-width="1.5"/>
<path d="M1889.5 262.5 v3 h15 v-3" fill="none" stroke="#111" stroke-width="1.4"/>
<path d="M1897.0 262.5 v-12 M1894.5 253.0 l2.5 -2.8 l2.5 2.8" fill="none" stroke="#f26e22" stroke-width="1.2"/>
<path d="M1463.5 339.5 l4 4 l4 -4" fill="none" stroke="#f26e22" stroke-width="1.1"/>
<text x="1479.3" y="346.3" font-size="13" fill="#333" font-weight="700" textLength="48.7" lengthAdjust="spacingAndGlyphs" >Typology</text>
<text x="1479.3" y="371.3" font-size="12.4" fill="#2b2b2b" textLength="110.2" lengthAdjust="spacingAndGlyphs" >Number of members</text>
<text x="1672.2" y="371.3" font-size="12.4" fill="#2b2b2b" textLength="6.5" lengthAdjust="spacingAndGlyphs" >2</text>
<path d="M1463.5 399.5 l4 4 l4 -4" fill="none" stroke="#f26e22" stroke-width="1.1"/>
<text x="1479.3" y="406.3" font-size="13" fill="#333" font-weight="700" textLength="30.7" lengthAdjust="spacingAndGlyphs" >Loads</text>
<text x="1479.3" y="431.3" font-size="12.4" fill="#2b2b2b" textLength="127.5" lengthAdjust="spacingAndGlyphs" >Result classes for checks</text>
<text x="1479.3" y="454.3" font-size="12.4" fill="#2b2b2b" textLength="124.5" lengthAdjust="spacingAndGlyphs" >Calculate load extremes</text>
<text x="1479.3" y="478.2" font-size="12.4" fill="#2b2b2b" textLength="104.8" lengthAdjust="spacingAndGlyphs" >Critical connections</text>
<text x="1479.3" y="502.2" font-size="12.4" fill="#2b2b2b" textLength="89.5" lengthAdjust="spacingAndGlyphs" >Load sub-groups</text>
<text x="1672" y="431.3" font-size="12.4" fill="#2b2b2b" textLength="114.5" lengthAdjust="spacingAndGlyphs" >Reference connection</text>
<text x="1672.2" y="478.2" font-size="12.4" fill="#2b2b2b" textLength="6.5" lengthAdjust="spacingAndGlyphs" >2</text>
<text x="1672.2" y="502.2" font-size="12.4" fill="#2b2b2b" textLength="5" lengthAdjust="spacingAndGlyphs" >1</text>
<rect x="1672.5" y="446.5" width="11" height="11" fill="#fff" stroke="#e4e4e4" stroke-width="1"/>
<path d="M1675 452 l2.5 2.5 l4.3 -4.6" fill="none" stroke="#f26e22" stroke-width="1.3"/>
<rect x="1666.4" y="442.6" width="25.7" height="21.7" rx="3" fill="none" stroke="#ff0000" stroke-width="5.5"/>
<rect x="1479.5" y="516.5" width="414" height="92" fill="#fff" />
<rect x="1480" y="517" width="413" height="32.5" fill="#f0f0f0" />
<rect x="1480" y="549.5" width="413" height="29" fill="#e1e1e1" />
<rect x="1480" y="517" width="413" height="91" fill="none" stroke="#b4b4b4" stroke-width="2"/>
<rect x="1507.9" y="517" width="1.2" height="91" fill="#b9b9b9" />
<rect x="1605.9" y="517" width="1.2" height="91" fill="#b9b9b9" />
<rect x="1721.0" y="517" width="1.2" height="91" fill="#b9b9b9" />
<rect x="1839.8" y="517" width="1.2" height="91" fill="#b9b9b9" />
<rect x="1480" y="548.7" width="413" height="1.2" fill="#b9b9b9" />
<rect x="1480" y="578.0" width="413" height="1.2" fill="#b9b9b9" />
<text x="1513.3" y="538" font-size="12.5" fill="#222" font-weight="700" textLength="85.5" lengthAdjust="spacingAndGlyphs" >Load sub-group</text>
<text x="1611.3" y="538" font-size="12.5" fill="#222" font-weight="700" textLength="102.5" lengthAdjust="spacingAndGlyphs" >Critical connection</text>
<text x="1726.3" y="538" font-size="12.5" fill="#222" font-weight="700" textLength="106.8" lengthAdjust="spacingAndGlyphs" >Critical load effects</text>
<path d="M1491 559.5 l5 5 l-5 5" fill="none" stroke="#333" stroke-width="1.3"/>
<text x="1513.3" y="569.3" font-size="12.4" fill="#2b2b2b" textLength="13" lengthAdjust="spacingAndGlyphs" >[1]</text>
<text x="1611.3" y="569.3" font-size="12.4" fill="#2b2b2b" textLength="20.5" lengthAdjust="spacingAndGlyphs" >N13</text>
<text x="1726.3" y="569.3" font-size="12.4" fill="#2b2b2b" textLength="11.8" lengthAdjust="spacingAndGlyphs" >24</text>
<text x="1513.3" y="598.3" font-size="12.4" fill="#2b2b2b" textLength="13" lengthAdjust="spacingAndGlyphs" >[1]</text>
<text x="1611.3" y="598.3" font-size="12.4" fill="#2b2b2b" textLength="20.5" lengthAdjust="spacingAndGlyphs" >N14</text>
<text x="1726.3" y="598.3" font-size="12.4" fill="#2b2b2b" textLength="11.8" lengthAdjust="spacingAndGlyphs" >22</text>
<circle cx="1854.8" cy="564.5" r="7" fill="none" stroke="#111" stroke-width="1.5"/>
<line x1="1854.8" y1="560.0" x2="1854.8" y2="556.7" stroke="#111" stroke-width="1.5"/>
<line x1="1854.8" y1="569.0" x2="1854.8" y2="572.3" stroke="#111" stroke-width="1.5"/>
<line x1="1850.3" y1="564.5" x2="1847.0" y2="564.5" stroke="#111" stroke-width="1.5"/>
<line x1="1859.3" y1="564.5" x2="1862.6" y2="564.5" stroke="#111" stroke-width="1.5"/>
<path d="M1871 568.5 v3 h15 v-3" fill="none" stroke="#111" stroke-width="1.4"/>
<path d="M1878.5 568.5 v-12 M1876 559.0 l2.5 -2.8 l2.5 2.8" fill="none" stroke="#f26e22" stroke-width="1.2"/>
<circle cx="1854.8" cy="593.5" r="7" fill="none" stroke="#111" stroke-width="1.5"/>
<line x1="1854.8" y1="589.0" x2="1854.8" y2="585.7" stroke="#111" stroke-width="1.5"/>
<line x1="1854.8" y1="598.0" x2="1854.8" y2="601.3" stroke="#111" stroke-width="1.5"/>
<line x1="1850.3" y1="593.5" x2="1847.0" y2="593.5" stroke="#111" stroke-width="1.5"/>
<line x1="1859.3" y1="593.5" x2="1862.6" y2="593.5" stroke="#111" stroke-width="1.5"/>
<path d="M1871 597.5 v3 h15 v-3" fill="none" stroke="#111" stroke-width="1.4"/>
<path d="M1878.5 597.5 v-12 M1876 588.0 l2.5 -2.8 l2.5 2.8" fill="none" stroke="#f26e22" stroke-width="1.2"/>
<text x="1479.3" y="624.5" font-size="12.4" fill="#1b6ed2" textLength="34.5" lengthAdjust="spacingAndGlyphs" >Details</text>
<rect x="1479.3" y="626.3" width="34.5" height="1" fill="#1b6ed2" />
<path d="M1275 322.5 l4 4 l4 -4" fill="none" stroke="#f26e22" stroke-width="1.1"/>
<text x="1299.2" y="327.7" font-size="12.4" fill="#444" textLength="67" lengthAdjust="spacingAndGlyphs" >Connections</text>
<path d="M1296 344.5 l4 4 l4 -4" fill="none" stroke="#f26e22" stroke-width="1.1"/>
<text x="1320.3" y="349.7" font-size="12.4" fill="#444" textLength="89.5" lengthAdjust="spacingAndGlyphs" >Arrangement 1-1</text>
<path d="M1317 366.5 l4 4 l4 -4" fill="none" stroke="#f26e22" stroke-width="1.1"/>
<text x="1341.4" y="371.7" font-size="12.4" fill="#444" textLength="41.3" lengthAdjust="spacingAndGlyphs" >Group 1</text>
<path d="M1341.60 385.55 L1341.76 384.04 L1344.24 384.04 L1344.40 385.55 L1345.64 386.26 L1347.02 385.65 L1348.26 387.79 L1347.04 388.69 L1347.04 390.11 L1348.26 391.01 L1347.02 393.15 L1345.64 392.54 L1344.40 393.25 L1344.24 394.76 L1341.76 394.76 L1341.60 393.25 L1340.36 392.54 L1338.98 393.15 L1337.74 391.01 L1338.96 390.11 L1338.96 388.69 L1337.74 387.79 L1338.98 385.65 L1340.36 386.26Z" fill="none" stroke="#1a1a1a" stroke-width="1.15" stroke-linejoin="round"/>
<circle cx="1343" cy="389.4" r="1.7" fill="none" stroke="#1a1a1a" stroke-width="1.1"/>
<text x="1353.6" y="393.7" font-size="12.4" fill="#1e1e1e" textLength="21.1" lengthAdjust="spacingAndGlyphs" >N15</text>
<rect x="1353.6" y="395.9" width="21.1" height="1" fill="#1e1e1e" />
<path d="M1341.60 407.55 L1341.76 406.04 L1344.24 406.04 L1344.40 407.55 L1345.64 408.26 L1347.02 407.65 L1348.26 409.79 L1347.04 410.69 L1347.04 412.11 L1348.26 413.01 L1347.02 415.15 L1345.64 414.54 L1344.40 415.25 L1344.24 416.76 L1341.76 416.76 L1341.60 415.25 L1340.36 414.54 L1338.98 415.15 L1337.74 413.01 L1338.96 412.11 L1338.96 410.69 L1337.74 409.79 L1338.98 407.65 L1340.36 408.26Z" fill="none" stroke="#1a1a1a" stroke-width="1.15" stroke-linejoin="round"/>
<circle cx="1343" cy="411.4" r="1.7" fill="none" stroke="#1a1a1a" stroke-width="1.1"/>
<text x="1353.6" y="415.7" font-size="12.4" fill="#7a7a7a" textLength="21.1" lengthAdjust="spacingAndGlyphs" >N16</text>
<path d="M1296 432.5 l4 4 l4 -4" fill="none" stroke="#f26e22" stroke-width="1.1"/>
<text x="1320.3" y="437.7" font-size="12.4" fill="#444" textLength="89.5" lengthAdjust="spacingAndGlyphs" >Arrangement 2-1</text>
<path d="M1317 454.5 l4 4 l4 -4" fill="none" stroke="#f26e22" stroke-width="1.1"/>
<text x="1341.4" y="459.7" font-size="12.4" fill="#444" textLength="41.5" lengthAdjust="spacingAndGlyphs" >Group 6</text>
<path d="M1341.60 473.55 L1341.76 472.04 L1344.24 472.04 L1344.40 473.55 L1345.64 474.26 L1347.02 473.65 L1348.26 475.79 L1347.04 476.69 L1347.04 478.11 L1348.26 479.01 L1347.02 481.15 L1345.64 480.54 L1344.40 481.25 L1344.24 482.76 L1341.76 482.76 L1341.60 481.25 L1340.36 480.54 L1338.98 481.15 L1337.74 479.01 L1338.96 478.11 L1338.96 476.69 L1337.74 475.79 L1338.98 473.65 L1340.36 474.26Z" fill="none" stroke="#1a1a1a" stroke-width="1.15" stroke-linejoin="round"/>
<circle cx="1343" cy="477.4" r="1.7" fill="none" stroke="#1a1a1a" stroke-width="1.1"/>
<text x="1353.6" y="481.7" font-size="12.4" fill="#1e1e1e" textLength="14" lengthAdjust="spacingAndGlyphs" >N3</text>
<rect x="1353.6" y="483.9" width="14" height="1" fill="#1e1e1e" />
<path d="M1341.60 495.55 L1341.76 494.04 L1344.24 494.04 L1344.40 495.55 L1345.64 496.26 L1347.02 495.65 L1348.26 497.79 L1347.04 498.69 L1347.04 500.11 L1348.26 501.01 L1347.02 503.15 L1345.64 502.54 L1344.40 503.25 L1344.24 504.76 L1341.76 504.76 L1341.60 503.25 L1340.36 502.54 L1338.98 503.15 L1337.74 501.01 L1338.96 500.11 L1338.96 498.69 L1337.74 497.79 L1338.98 495.65 L1340.36 496.26Z" fill="none" stroke="#1a1a1a" stroke-width="1.15" stroke-linejoin="round"/>
<circle cx="1343" cy="499.4" r="1.7" fill="none" stroke="#1a1a1a" stroke-width="1.1"/>
<text x="1353.6" y="503.7" font-size="12.4" fill="#7a7a7a" textLength="14" lengthAdjust="spacingAndGlyphs" >N5</text>
<path d="M1317 520.5 l4 4 l4 -4" fill="none" stroke="#f26e22" stroke-width="1.1"/>
<path d="M1341.60 539.55 L1341.76 538.04 L1344.24 538.04 L1344.40 539.55 L1345.64 540.26 L1347.02 539.65 L1348.26 541.79 L1347.04 542.69 L1347.04 544.11 L1348.26 545.01 L1347.02 547.15 L1345.64 546.54 L1344.40 547.25 L1344.24 548.76 L1341.76 548.76 L1341.60 547.25 L1340.36 546.54 L1338.98 547.15 L1337.74 545.01 L1338.96 544.11 L1338.96 542.69 L1337.74 541.79 L1338.98 539.65 L1340.36 540.26Z" fill="none" stroke="#1a1a1a" stroke-width="1.15" stroke-linejoin="round"/>
<circle cx="1343" cy="543.4000000000001" r="1.7" fill="none" stroke="#1a1a1a" stroke-width="1.1"/>
<text x="1353.6" y="547.7" font-size="12.4" fill="#1e1e1e" textLength="21.1" lengthAdjust="spacingAndGlyphs" >N13</text>
<rect x="1353.6" y="549.9000000000001" width="21.1" height="1" fill="#1e1e1e" />
<path d="M1341.60 561.55 L1341.76 560.04 L1344.24 560.04 L1344.40 561.55 L1345.64 562.26 L1347.02 561.65 L1348.26 563.79 L1347.04 564.69 L1347.04 566.11 L1348.26 567.01 L1347.02 569.15 L1345.64 568.54 L1344.40 569.25 L1344.24 570.76 L1341.76 570.76 L1341.60 569.25 L1340.36 568.54 L1338.98 569.15 L1337.74 567.01 L1338.96 566.11 L1338.96 564.69 L1337.74 563.79 L1338.98 561.65 L1340.36 562.26Z" fill="none" stroke="#1a1a1a" stroke-width="1.15" stroke-linejoin="round"/>
<circle cx="1343" cy="565.4000000000001" r="1.7" fill="none" stroke="#1a1a1a" stroke-width="1.1"/>
<text x="1353.6" y="569.7" font-size="12.4" fill="#7a7a7a" textLength="21.1" lengthAdjust="spacingAndGlyphs" >N14</text>
<path d="M1296 586.5 l4 4 l4 -4" fill="none" stroke="#f26e22" stroke-width="1.1"/>
<text x="1320.3" y="591.7" font-size="12.4" fill="#444" textLength="89.5" lengthAdjust="spacingAndGlyphs" >Arrangement 3-1</text>
<path d="M1317 608.5 l4 4 l4 -4" fill="none" stroke="#f26e22" stroke-width="1.1"/>
<text x="1341.4" y="613.7" font-size="12.4" fill="#444" textLength="41.5" lengthAdjust="spacingAndGlyphs" >Group 3</text>
<path d="M1341.60 627.55 L1341.76 626.04 L1344.24 626.04 L1344.40 627.55 L1345.64 628.26 L1347.02 627.65 L1348.26 629.79 L1347.04 630.69 L1347.04 632.11 L1348.26 633.01 L1347.02 635.15 L1345.64 634.54 L1344.40 635.25 L1344.24 636.76 L1341.76 636.76 L1341.60 635.25 L1340.36 634.54 L1338.98 635.15 L1337.74 633.01 L1338.96 632.11 L1338.96 630.69 L1337.74 629.79 L1338.98 627.65 L1340.36 628.26Z" fill="none" stroke="#1a1a1a" stroke-width="1.15" stroke-linejoin="round"/>
<circle cx="1343" cy="631.4000000000001" r="1.7" fill="none" stroke="#1a1a1a" stroke-width="1.1"/>
<text x="1353.6" y="635.7" font-size="12.4" fill="#1e1e1e" textLength="14" lengthAdjust="spacingAndGlyphs" >N9</text>
<rect x="1353.6" y="637.9000000000001" width="14" height="1" fill="#1e1e1e" />
<path d="M1341.60 649.55 L1341.76 648.04 L1344.24 648.04 L1344.40 649.55 L1345.64 650.26 L1347.02 649.65 L1348.26 651.79 L1347.04 652.69 L1347.04 654.11 L1348.26 655.01 L1347.02 657.15 L1345.64 656.54 L1344.40 657.25 L1344.24 658.76 L1341.76 658.76 L1341.60 657.25 L1340.36 656.54 L1338.98 657.15 L1337.74 655.01 L1338.96 654.11 L1338.96 652.69 L1337.74 651.79 L1338.98 649.65 L1340.36 650.26Z" fill="none" stroke="#1a1a1a" stroke-width="1.15" stroke-linejoin="round"/>
<circle cx="1343" cy="653.4000000000001" r="1.7" fill="none" stroke="#1a1a1a" stroke-width="1.1"/>
<text x="1353.6" y="657.7" font-size="12.4" fill="#7a7a7a" textLength="21.1" lengthAdjust="spacingAndGlyphs" >N12</text>
<path d="M1296 674.5 l4 4 l4 -4" fill="none" stroke="#f26e22" stroke-width="1.1"/>
<text x="1320.3" y="679.7" font-size="12.4" fill="#444" textLength="89.5" lengthAdjust="spacingAndGlyphs" >Arrangement 3-2</text>
<path d="M1317 696.5 l4 4 l4 -4" fill="none" stroke="#f26e22" stroke-width="1.1"/>
<text x="1341.4" y="701.7" font-size="12.4" fill="#444" textLength="41.5" lengthAdjust="spacingAndGlyphs" >Group 4</text>
<path d="M1341.60 715.55 L1341.76 714.04 L1344.24 714.04 L1344.40 715.55 L1345.64 716.26 L1347.02 715.65 L1348.26 717.79 L1347.04 718.69 L1347.04 720.11 L1348.26 721.01 L1347.02 723.15 L1345.64 722.54 L1344.40 723.25 L1344.24 724.76 L1341.76 724.76 L1341.60 723.25 L1340.36 722.54 L1338.98 723.15 L1337.74 721.01 L1338.96 720.11 L1338.96 718.69 L1337.74 717.79 L1338.98 715.65 L1340.36 716.26Z" fill="none" stroke="#1a1a1a" stroke-width="1.15" stroke-linejoin="round"/>
<circle cx="1343" cy="719.4000000000001" r="1.7" fill="none" stroke="#1a1a1a" stroke-width="1.1"/>
<text x="1353.6" y="723.7" font-size="12.4" fill="#1e1e1e" textLength="14" lengthAdjust="spacingAndGlyphs" >N1</text>
<rect x="1353.6" y="725.9000000000001" width="14" height="1" fill="#1e1e1e" />
<path d="M1341.60 737.55 L1341.76 736.04 L1344.24 736.04 L1344.40 737.55 L1345.64 738.26 L1347.02 737.65 L1348.26 739.79 L1347.04 740.69 L1347.04 742.11 L1348.26 743.01 L1347.02 745.15 L1345.64 744.54 L1344.40 745.25 L1344.24 746.76 L1341.76 746.76 L1341.60 745.25 L1340.36 744.54 L1338.98 745.15 L1337.74 743.01 L1338.96 742.11 L1338.96 740.69 L1337.74 739.79 L1338.98 737.65 L1340.36 738.26Z" fill="none" stroke="#1a1a1a" stroke-width="1.15" stroke-linejoin="round"/>
<circle cx="1343" cy="741.4000000000001" r="1.7" fill="none" stroke="#1a1a1a" stroke-width="1.1"/>
<text x="1353.6" y="745.7" font-size="12.4" fill="#7a7a7a" textLength="14" lengthAdjust="spacingAndGlyphs" >N2</text>
<path d="M1341.60 759.55 L1341.76 758.04 L1344.24 758.04 L1344.40 759.55 L1345.64 760.26 L1347.02 759.65 L1348.26 761.79 L1347.04 762.69 L1347.04 764.11 L1348.26 765.01 L1347.02 767.15 L1345.64 766.54 L1344.40 767.25 L1344.24 768.76 L1341.76 768.76 L1341.60 767.25 L1340.36 766.54 L1338.98 767.15 L1337.74 765.01 L1338.96 764.11 L1338.96 762.69 L1337.74 761.79 L1338.98 759.65 L1340.36 760.26Z" fill="none" stroke="#1a1a1a" stroke-width="1.15" stroke-linejoin="round"/>
<circle cx="1343" cy="763.4000000000001" r="1.7" fill="none" stroke="#1a1a1a" stroke-width="1.1"/>
<text x="1353.6" y="767.7" font-size="12.4" fill="#7a7a7a" textLength="14" lengthAdjust="spacingAndGlyphs" >N7</text>
<path d="M1341.60 781.55 L1341.76 780.04 L1344.24 780.04 L1344.40 781.55 L1345.64 782.26 L1347.02 781.65 L1348.26 783.79 L1347.04 784.69 L1347.04 786.11 L1348.26 787.01 L1347.02 789.15 L1345.64 788.54 L1344.40 789.25 L1344.24 790.76 L1341.76 790.76 L1341.60 789.25 L1340.36 788.54 L1338.98 789.15 L1337.74 787.01 L1338.96 786.11 L1338.96 784.69 L1337.74 783.79 L1338.98 781.65 L1340.36 782.26Z" fill="none" stroke="#1a1a1a" stroke-width="1.15" stroke-linejoin="round"/>
<circle cx="1343" cy="785.4000000000001" r="1.7" fill="none" stroke="#1a1a1a" stroke-width="1.1"/>
<text x="1353.6" y="789.7" font-size="12.4" fill="#7a7a7a" textLength="14" lengthAdjust="spacingAndGlyphs" >N8</text>
<path d="M1296 806.5 l4 4 l4 -4" fill="none" stroke="#f26e22" stroke-width="1.1"/>
<text x="1320.3" y="811.7" font-size="12.4" fill="#444" textLength="89.5" lengthAdjust="spacingAndGlyphs" >Arrangement 4-1</text>
<path d="M1317 828.5 l4 4 l4 -4" fill="none" stroke="#f26e22" stroke-width="1.1"/>
<text x="1341.4" y="833.7" font-size="12.4" fill="#444" textLength="41.5" lengthAdjust="spacingAndGlyphs" >Group 5</text>
<path d="M1341.60 847.55 L1341.76 846.04 L1344.24 846.04 L1344.40 847.55 L1345.64 848.26 L1347.02 847.65 L1348.26 849.79 L1347.04 850.69 L1347.04 852.11 L1348.26 853.01 L1347.02 855.15 L1345.64 854.54 L1344.40 855.25 L1344.24 856.76 L1341.76 856.76 L1341.60 855.25 L1340.36 854.54 L1338.98 855.15 L1337.74 853.01 L1338.96 852.11 L1338.96 850.69 L1337.74 849.79 L1338.98 847.65 L1340.36 848.26Z" fill="none" stroke="#1a1a1a" stroke-width="1.15" stroke-linejoin="round"/>
<circle cx="1343" cy="851.4000000000001" r="1.7" fill="none" stroke="#1a1a1a" stroke-width="1.1"/>
<text x="1353.6" y="855.7" font-size="12.4" fill="#1e1e1e" textLength="21.1" lengthAdjust="spacingAndGlyphs" >N10</text>
<rect x="1353.6" y="857.9000000000001" width="21.1" height="1" fill="#1e1e1e" />
<path d="M1341.60 869.55 L1341.76 868.04 L1344.24 868.04 L1344.40 869.55 L1345.64 870.26 L1347.02 869.65 L1348.26 871.79 L1347.04 872.69 L1347.04 874.11 L1348.26 875.01 L1347.02 877.15 L1345.64 876.54 L1344.40 877.25 L1344.24 878.76 L1341.76 878.76 L1341.60 877.25 L1340.36 876.54 L1338.98 877.15 L1337.74 875.01 L1338.96 874.11 L1338.96 872.69 L1337.74 871.79 L1338.98 869.65 L1340.36 870.26Z" fill="none" stroke="#1a1a1a" stroke-width="1.15" stroke-linejoin="round"/>
<circle cx="1343" cy="873.4000000000001" r="1.7" fill="none" stroke="#1a1a1a" stroke-width="1.1"/>
<text x="1353.6" y="877.7" font-size="12.4" fill="#7a7a7a" textLength="21.1" lengthAdjust="spacingAndGlyphs" >N11</text>
<rect x="1326.6" y="505.2" width="97.7" height="31" rx="3.5" fill="none" stroke="#ff0000" stroke-width="5.5"/>
<rect x="1332" y="511" width="87" height="20.8" fill="#f26e22" />
<text x="1341" y="524.9" font-size="12.6" fill="#fff" textLength="43.5" lengthAdjust="spacingAndGlyphs" >Group 7</text>
<path d="M24 96.4 H55.8 M24 102.4 H55.8" fill="none" stroke="#111" stroke-width="1.4" stroke-linejoin="miter" />
<path d="M27.2 89.2 L33.8 95.8 M30.3 86 L39.8 96 L49.5 86 M52.7 89.2 L46.1 95.8" fill="none" stroke="#111" stroke-width="1.3" stroke-linejoin="miter" />
<path d="M51.4 71.2 V81.5 M47.199999999999996 77.2 L51.4 81.5 L55.6 77.2" fill="none" stroke="#f26e22" stroke-width="1.25" stroke-linejoin="miter" />
<path d="M85.3 81.2 H99.1 L115.4 89.5 H100.8 Z M100.8 89.5 V101.5 H115.4 V89.5 M85.3 81.2 V92.4 L100.8 101.5" fill="none" stroke="#111" stroke-width="1.3" stroke-linejoin="miter" />
<path d="M111.5 71.2 V81.5 M107.3 77.2 L111.5 81.5 L115.7 77.2" fill="none" stroke="#f26e22" stroke-width="1.25" stroke-linejoin="miter" />
<path d="M134.3 88.6 H145.8 V91.8 H134.3 Z" fill="none" stroke="#111" stroke-width="1.2" stroke-linejoin="miter" />
<path d="M134.4 83.6 L140 88.4 L145.6 83.6 M136.4 82.8 L140 86.2 L143.6 82.8" fill="none" stroke="#111" stroke-width="1.0" stroke-linejoin="miter" />
<path d="M145.5 81.7 V76.3 M143.1 78.7 L145.5 76.3 L147.9 78.7" fill="none" stroke="#f26e22" stroke-width="1.2" stroke-linejoin="miter" />
<path d="M132.2 99.8 L135.5 96.4 H141.5 M132.2 99.8 V111.6 H145.6 V103" fill="none" stroke="#111" stroke-width="1.2" stroke-linejoin="miter" />
<text x="134.2" y="109.6" font-size="7.2" font-weight="700" fill="#111" textLength="10.5" lengthAdjust="spacingAndGlyphs">IFC</text>
<path d="M145.5 102 V96.5 M143.1 98.9 L145.5 96.5 L147.9 98.9" fill="none" stroke="#f26e22" stroke-width="1.2" stroke-linejoin="miter" />
<path d="M133.3 121 L137 117.3 H146.9 V132.6 H133.3 Z" fill="none" stroke="#111" stroke-width="1.2" stroke-linejoin="miter" />
<path d="M136.6 125.5 L142.5 122 L143 130 Z M137 132.5 V125.5" fill="none" stroke="#111" stroke-width="1.2" stroke-linejoin="miter" />
<path d="M290.6 76.4 V71.2 H277.8 V101.4 H290.6 V96.7 M295.5 76.4 V71.2 H308 V101.4 H295.5 V96.7" fill="none" stroke="#111" stroke-width="1.4" stroke-linejoin="miter" />
<rect x="277.1" y="73" width="1.4" height="27" fill="#777"/><rect x="307.3" y="73" width="1.4" height="27" fill="#777"/>
<path d="M304.4 81.4 H281.9 M285.7 77.2 L281.7 81.4 L285.7 85.6 M281.7 91.4 H304.2 M300.4 87.2 L304.4 91.4 L300.4 95.6" fill="none" stroke="#f26e22" stroke-width="1.25" stroke-linejoin="miter" />
<path d="M341.5 70.4 V84.2 M341.5 90.6 V101.4 M344.8 87.4 H359 M343.6 85.2 L351.6 77.2" fill="none" stroke="#111" stroke-width="1.25" stroke-linejoin="miter" />
<circle cx="341.9" cy="87.4" r="1.8" fill="none" stroke="#f26e22" stroke-width="1.1"/>
<path d="M380.4 76.4 H394.6 L411.6 85.5 H396.2 Z M396.2 85.5 V97.7 H411.6 V85.5 M380.4 76.4 V87.3 L396.2 97.7" fill="none" stroke="#111" stroke-width="1.3" stroke-linejoin="miter" />
<path d="M445.5 95.3 H453.1 L445.2 86.8 L448.2 84.4 L457.5 92.8 L466.2 84.4 L469.3 86.8 L461.9 95.3 H469.3 V101.5 H445.5 Z" fill="none" stroke="#111" stroke-width="1.3" stroke-linejoin="miter" />
<path d="M502.3 94.7 V86.2 H527.5 V94.7 M514.9 86.2 V94.7" fill="none" stroke="#111" stroke-width="1.25" stroke-linejoin="miter" />
<path d="M499.3 94.7 h7 v6.8 h-7 Z M511.4 94.7 h7 v6.8 h-7 Z M523.9 94.7 h7 v6.8 h-7 Z" fill="none" stroke="#111" stroke-width="1.25" stroke-linejoin="miter" />
<path d="M551.3 88.4 V70.8 M547.1 74.6 L551.3 70.4 L555.5 74.6 M551.3 88.4 H569.2 M565.4 84.2 L569.6 88.4 L565.4 92.6 M551.3 88.4 L538.8 101.1 M538.6 96.2 V101.3 H543.7" fill="none" stroke="#111" stroke-width="1.25" stroke-linejoin="miter" />
<path d="M580.3 96 V102.3 H611.8 V96" fill="none" stroke="#a9a9a9" stroke-width="1.2" stroke-linejoin="miter" />
<path d="M596 96 V71.8 M591.8 75.8 L596 71.6 L600.2 75.8" fill="none" stroke="#f6c7a8" stroke-width="1.2" stroke-linejoin="miter" />
<path d="M627 76.5 A13.2 13.2 0 1 1 625.2 78.6" fill="none" stroke="#f6c7a8" stroke-width="1.2"/>
<path d="M637 71.2 L632.6 75.2 L637 79.2" fill="none" stroke="#f6c7a8" stroke-width="1.2" stroke-linejoin="miter" />
<circle cx="633.8" cy="89.1" r="1.9" fill="#f6c7a8"/>
<path d="M677.2 76.6 H687.8 M682.5 71.3 V81.89999999999999" fill="none" stroke="#f6c7a8" stroke-width="1.2" stroke-linejoin="miter" />
<path d="M659.5 95.4 V87.5 H684.4 V95.4 M672 87.5 V95.4" fill="none" stroke="#a9a9a9" stroke-width="1.2" stroke-linejoin="miter" />
<path d="M656.5 95.4 h7 v7 h-7 Z M668.5 95.4 h7 v7 h-7 Z M680.9 95.4 h7 v7 h-7 Z" fill="none" stroke="#a9a9a9" stroke-width="1.2" stroke-linejoin="miter" />
<path d="M702.6 71.3 H733.7 V102.4 H702.6 Z" fill="none" stroke="#a9a9a9" stroke-width="1.2" stroke-linejoin="miter" />
<path d="M705.5 79.5 H715.5 M710.5 74.5 V84.5 M721 79.5 H731 M706.5 90.5 L714.5 98.5 M714.5 90.5 L706.5 98.5 M721 94.5 H731" fill="none" stroke="#f6c7a8" stroke-width="1.2" stroke-linejoin="miter" />
<circle cx="726" cy="90.8" r="0.9" fill="#f6c7a8"/><circle cx="726" cy="98.2" r="0.9" fill="#f6c7a8"/>
<path d="M748.4 87.6 A15.4 15.4 0 0 1 775.3 76.4" fill="none" stroke="#111" stroke-width="1.3"/>
<path d="M779.1999999999999 86.2 A15.4 15.4 0 0 1 752.3 97.2" fill="none" stroke="#111" stroke-width="1.3"/>
<path d="M769.8 77.2 H776.1999999999999 V71.2" fill="none" stroke="#111" stroke-width="1.3" stroke-linejoin="miter" />
<path d="M751.5999999999999 102.6 V96.6 H757.5999999999999" fill="none" stroke="#111" stroke-width="1.3" stroke-linejoin="miter" />
<path d="M754.4 83.6 h6.9 v6.5 h-6.9 Z M766.4 83.6 h6.9 v6.5 h-6.9 Z" fill="none" stroke="#111" stroke-width="1.3" stroke-linejoin="miter" />
<path d="M867.6 87.6 A15.4 15.4 0 0 1 894.5 76.4" fill="none" stroke="#111" stroke-width="1.3"/>
<path d="M898.4 86.2 A15.4 15.4 0 0 1 871.5 97.2" fill="none" stroke="#111" stroke-width="1.3"/>
<path d="M889 77.2 H895.4 V71.2" fill="none" stroke="#111" stroke-width="1.3" stroke-linejoin="miter" />
<path d="M870.8 102.6 V96.6 H876.8" fill="none" stroke="#111" stroke-width="1.3" stroke-linejoin="miter" />
<path d="M873.6 83.6 h6.9 v6.5 h-6.9 Z M885.6 83.6 h6.9 v6.5 h-6.9 Z" fill="none" stroke="#111" stroke-width="1.3" stroke-linejoin="miter" />
<path d="M795.6 77.2 V71.3 H808.8 V77.2 M786.2 77.2 H817.5 M790 77.2 V102.5 H813.8 V77.2 M796.3 83.5 V96.6 M807.5 83.5 V96.6" fill="none" stroke="#111" stroke-width="1.3" stroke-linejoin="miter" />
<path d="M829.2 102.5 H860.8 M836.5 75.9 V102 M844.5 75.9 V102 M852.5 84.2 V102 M832.3 97 L836.5 101.5 L840.5 97 L844.5 101.5 L848.5 97 L852.5 101.5 L856.7 97" fill="none" stroke="#111" stroke-width="1.25" stroke-linejoin="miter" />
<path d="M860.30 76.90 L858.60 78.43 L858.72 80.72 L856.43 80.60 L854.90 82.30 L853.37 80.60 L851.08 80.72 L851.20 78.43 L849.50 76.90 L851.20 75.37 L851.08 73.08 L853.37 73.20 L854.90 71.50 L856.43 73.20 L858.72 73.08 L858.60 75.37 Z" fill="none" stroke="#f26e22" stroke-width="1.2"/><circle cx="854.9" cy="76.9" r="1.7" fill="none" stroke="#f26e22" stroke-width="1.1"/>
<path d="M906 76.4 H916.9 L926.8 86.5 H937.5 M906 96.4 H916.9 L926.8 86.5 M933.3 82.2 L937.7 86.5 L933.3 90.8" fill="none" stroke="#a9a9a9" stroke-width="1.2" stroke-linejoin="miter" />
<path d="M944 86.5 H953.9 L964.3 77.1 H975.5 M953.9 86.5 L964.3 97.25 H975.5 M971.3 72.8 L975.7 77.1 L971.3 81.4 M971.3 93 L975.7 97.25 L971.3 101.5" fill="none" stroke="#a9a9a9" stroke-width="1.2" stroke-linejoin="miter" />
<path d="M986.4 72.5 L1017.6 99.3 V85.8 H986.4 Z" fill="none" stroke="#111" stroke-width="1.3" stroke-linejoin="miter" />
<path d="M990.5 76 V85.8 M994.5 79.5 V85.8 M998.5 82.9 V85.8 M1005 85.8 V88.8 M1009 85.8 V92.2 M1013 85.8 V95.6" fill="none" stroke="#111" stroke-width="1.1" stroke-linejoin="miter" />
<path d="M1096.5 100.4 V91.6 M1094.2 93.8 L1096.5 91.4 L1098.8 93.8 M1096.5 100.4 H1105.2 M1103.2 98.1 L1105.6 100.4 L1103.2 102.7 M1096.5 100.4 L1090.6 106.2 M1090.2 103.3 V106.6 H1093.5" fill="none" stroke="#111" stroke-width="1.4" stroke-linejoin="miter" />
<path d="M1403.0 76.4 H1414.0 M1408.5 70.9 V81.9" fill="none" stroke="#f26e22" stroke-width="1.2" stroke-linejoin="miter" />
<path d="M1385.8 95.8 H1392.6 L1386.5 89.5 L1389 87.3 L1397.6 94.4 L1406.2 87.3 L1408.8 89.5 L1402.6 95.8 H1409.4 V102.3 H1385.8 Z" fill="none" stroke="#111" stroke-width="1.35" stroke-linejoin="miter" />
<path d="M1460.9 76.4 H1471.9 M1466.4 70.9 V81.9" fill="none" stroke="#f26e22" stroke-width="1.2" stroke-linejoin="miter" />
<path d="M1444.3 102.3 V85.6 H1467.6 V102.3 H1461.9 V90.8 H1450 V102.3 Z" fill="none" stroke="#111" stroke-width="1.35" stroke-linejoin="miter" />
<rect x="1223.5" y="164" width="1" height="25" fill="#d6d6d6" />
<rect x="1294.5" y="164" width="1" height="25" fill="#d6d6d6" />
<rect x="1375.5" y="164" width="1" height="25" fill="#d6d6d6" />
<rect x="1349" y="164.2" width="24" height="23.4" fill="#e8e8e8" />
<path d="M1203.5 170 V182.3 M1203.8 182.3 H1214.5 M1207 170 H1209" fill="none" stroke="#111" stroke-width="1.2" stroke-linejoin="miter" stroke-dasharray="3 2"/>
<circle cx="1203.5" cy="169.8" r="1.2" fill="#111"/><circle cx="1203.5" cy="182.3" r="1.3" fill="#111"/><circle cx="1214.6" cy="182.3" r="1.3" fill="#111"/>
<path d="M1210 168.2 L1217.2 175.5 L1213.5 175.8 L1211.2 178.8 Z" fill="#111"/>
<path d="M1231 169 L1235 173 M1231 169 V172 M1231 169 H1234 M1245 169 L1241 173 M1245 169 V172 M1245 169 H1242 M1231 183 L1235 179 M1231 183 V180 M1231 183 H1234 M1245 183 L1241 179 M1245 183 V180 M1245 183 H1242" fill="none" stroke="#111" stroke-width="1.1" stroke-linejoin="miter" />
<path d="M1261.5 171.8 C1255.5 173.5 1254.5 183 1260.5 184.2 M1265.5 182 C1271.5 180.5 1272.5 170.5 1267.5 168.6" fill="none" stroke="#111" stroke-width="1.25"/>
<path d="M1258 171.4 L1261.6 171.8 L1261.3 175.6 M1265.8 178.2 L1265.5 182 L1269.4 181.8" fill="none" stroke="#111" stroke-width="1.2" stroke-linejoin="miter" />
<path d="M1279.5 174 l3.8 3.8 l3.8 -3.8" fill="none" stroke="#111" stroke-width="1.0" stroke-linejoin="miter" />
<path d="M1302 172.8 h11 v11 h-11 Z" fill="none" stroke="#111" stroke-width="1.4"/>
<path d="M1302 172.8 l4 -4 h11 l-4 4 Z" fill="none" stroke="#111" stroke-width="1.4"/>
<path d="M1313 172.8 l4 -4 v11 l-4 4 Z" fill="none" stroke="#111" stroke-width="1.4"/>
<path d="M1302 183.8 L1306.5 179 M1306.5 179 V173.5 M1306.5 179 H1311" fill="none" stroke="#111" stroke-width="1.1" stroke-linejoin="miter" />
<path d="M1328 172.8 h11 v11 h-11 Z" fill="#c8c8c8" stroke="#111" stroke-width="1.4"/>
<path d="M1328 172.8 l4 -4 h11 l-4 4 Z" fill="#c8c8c8" stroke="#111" stroke-width="1.4"/>
<path d="M1339 172.8 l4 -4 v11 l-4 4 Z" fill="#c8c8c8" stroke="#111" stroke-width="1.4"/>
<path d="M1328 183.8 L1332.5 179 M1332.5 179 V173.5 M1332.5 179 H1337" fill="none" stroke="#111" stroke-width="1.1" stroke-linejoin="miter" />
<path d="M1353.5 172.8 h11 v11 h-11 Z" fill="#111" stroke="#111" stroke-width="1.4"/>
<path d="M1353.5 172.8 l4 -4 h11 l-4 4 Z" fill="#111" stroke="#111" stroke-width="1.4"/>
<path d="M1364.5 172.8 l4 -4 v11 l-4 4 Z" fill="#111" stroke="#111" stroke-width="1.4"/>
<path d="M1353.5 172.8 l4 -4 h11 l-4 4 Z M1364.5 172.8 l4 -4" fill="none" stroke="#e8e8e8" stroke-width="0.6"/>
<path d="M1383 173 L1393.5 169.8 L1398 171.5 L1387.5 175 Z M1383 173 V179 L1387.5 181.5 V175 M1387.5 181.5 L1397.6 177.5 V171.5" fill="none" stroke="#111" stroke-width="1.25" stroke-linejoin="miter" />
<path d="M1408.5 176.5 L1416 169 L1423.5 176.5 M1410.5 174.8 V183.5 H1414 V178.5 H1418 V183.5 H1421.5 V174.8" fill="none" stroke="#111" stroke-width="1.2" stroke-linejoin="miter" />
<defs><radialGradient id="ring" cx="0.5" cy="0.5" r="0.5"><stop offset="0.62" stop-color="#ffffff"/><stop offset="0.78" stop-color="#c9c9c9"/><stop offset="1" stop-color="#bdbdbd"/></radialGradient></defs>
<ellipse cx="1384.5" cy="259.5" rx="37.5" ry="22" fill="url(#ring)"/>
<defs><radialGradient id="ring2" cx="0.5" cy="0.3" r="0.6"><stop offset="0.5" stop-color="#ffffff" stop-opacity="0"/><stop offset="1" stop-color="#9a9a9a" stop-opacity="0.5"/></radialGradient></defs>
<path d="M1358 227.4 L1383.3 220.2 L1409.8 227.7 L1406.8 257.2 L1384.8 272.6 L1360.5 258.6 Z" fill="#6a6a6a" stroke="#111" stroke-width="1.5" stroke-linejoin="round"/>
<path d="M1358 227.4 L1384.2 237.2 L1409.8 227.7 M1384.2 237.2 L1384.8 272.6" fill="none" stroke="#111" stroke-width="1.5"/>
<path d="M1358 227.4 L1384.2 237.2 L1409.8 227.7 L1383.3 220.2 Z" fill="#5f5f5f"/>
<path d="M1358 227.4 L1384.2 237.2 L1409.8 227.7 L1383.3 220.2 Z M1384.2 237.2 L1384.8 272.6" fill="none" stroke="#111" stroke-width="1.5" stroke-linejoin="round"/>
<path d="M1346 272.5 H1362 M1354 268 V278.5" stroke="#111" stroke-width="2" fill="none"/>
<path d="M1409 267.5 L1418 272.5 L1422.5 275.5 M1414.5 270 L1417 266.5 M1416 273.5 L1411.5 275" stroke="#111" stroke-width="2" fill="none"/>
<path d="M1383.5 227 l2.5 -1.3 M1381.5 227.5 l0.8 0.5 M1368.5 249 l1.8 4.5 M1367.5 250 l1 -1.5 M1396.5 249 l1.5 -3.5 M1395.5 252 l1 -1.5" stroke="#fff" stroke-width="1.1" fill="none"/></svg>
</body></html>
